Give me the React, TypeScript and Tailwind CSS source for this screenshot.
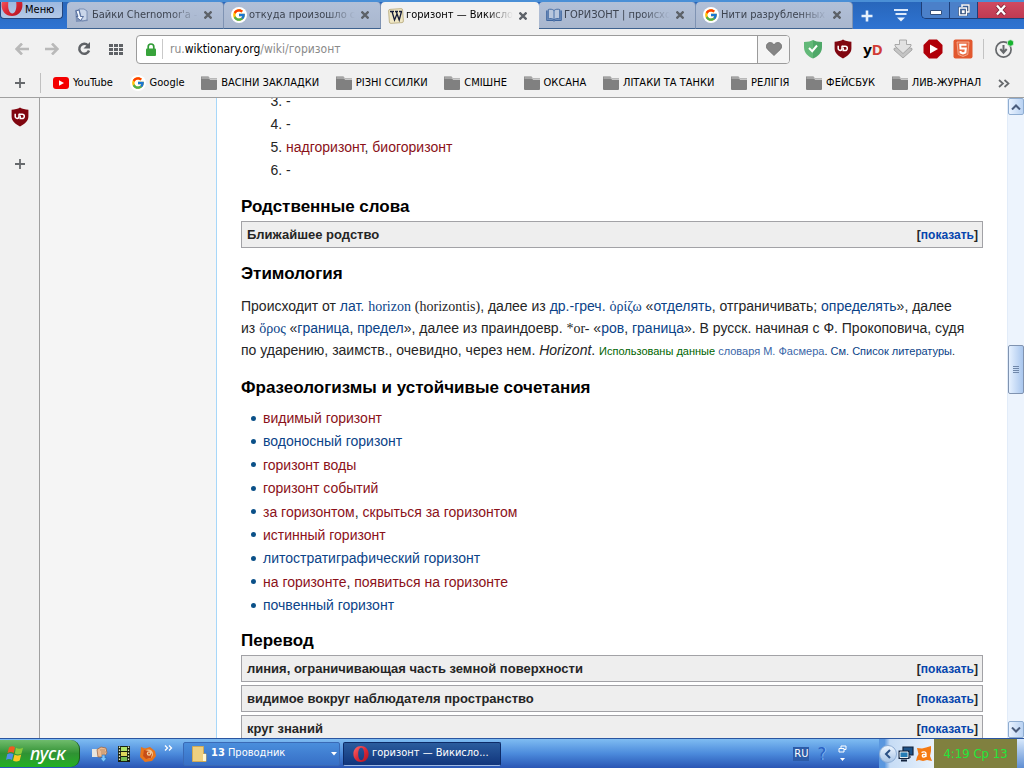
import React from "react";
import { FcGoogle } from "react-icons/fc";

function Shield({ className }: { className: string }) {
  return (
    <svg viewBox="0 0 20 20" className={className} aria-hidden="true">
      <path d="M10 0.6C7.8 2.1 4.8 2.6 1.6 2.7v6.8c0 4.6 3.8 7.6 8.4 10 4.6-2.4 8.4-5.4 8.4-10V2.7C15.200 2.600 12.200 2.100 10 0.600z" fill="#800610" />
      <path d="M5.200 6.800v2.700a1.900 1.900 0 0 0 3.800 0V6.800" fill="none" stroke="#fff" strokeWidth="1.500" />
      <path d="M9 7.300h3.200a2.100 2.100 0 0 1 0 4.200H10.200V8.500" fill="none" stroke="#fff" strokeWidth="1.500" />
    </svg>
  );
}

function Folder() {
  return (
    <svg viewBox="0 0 16 14" className="h-[14px] w-4 shrink-0" aria-hidden="true">
      <path d="M0 0.500h7.500l1.500 2H16V13a1 1 0 0 1-1 1H1a1 1 0 0 1-1-1z" fill="#808080" />
      <path d="M0.500 2h7.500l1 1.500h7" stroke="#c9c9c9" strokeWidth="1" fill="none" />
    </svg>
  );
}

function OperaO({ className }: { className: string }) {
  return (
    <svg viewBox="0 0 20 20" className={className} aria-hidden="true">
      <defs>
        <linearGradient id="opera" x1="0" x2="1" y1="0" y2="1">
          <stop offset="0" stopColor="#ff6a6a" />
          <stop offset="0.500" stopColor="#dd2a38" />
          <stop offset="1" stopColor="#b0121f" />
        </linearGradient>
      </defs>
      <path fillRule="evenodd" fill="url(#opera)" d="M10 0c5.500 0 9.500 4.200 9.500 10S15.500 20 10 20 0.500 15.800 0.500 10 4.500 0 10 0zm0.300 2.300C7.900 2.300 6.500 5.500 6.500 10s1.400 7.700 3.800 7.700S14 14.500 14 10s-1.400-7.700-3.700-7.700z" />
    </svg>
  );
}

function Google() {
  return (
    <span className="flex size-4 shrink-0 items-center justify-center rounded-full bg-white">
      <FcGoogle className="size-[14px]" />
    </span>
  );
}

function PageIcon() {
  return (
    <svg viewBox="0 0 16 16" className="size-4 shrink-0" aria-hidden="true">
      <path d="M1 3l7-1 6 12-12 1z" fill="#7f93b8" />
      <path d="M5 2h5l3 2v9l-5 1z" fill="#c9d6ea" stroke="#6a80a8" strokeWidth="0.800" />
      <path d="M2 4l3-1 1.500 6.500h3l-3 4-4.500-4h2z" fill="#f3f8ff" stroke="#4d6698" strokeWidth="0.900" />
    </svg>
  );
}

function WikiIcon() {
  return (
    <svg viewBox="0 0 16 16" className="size-4 shrink-0" aria-hidden="true">
      <rect x="1" y="1" width="14" height="14" rx="1.500" fill="#f1e8c6" stroke="#b5a778" strokeWidth="0.800" transform="rotate(-4 8 8)" />
      <path d="M2 3.500h4M7 3.500h3M11 3.500h3M4 3.500l2.500 8.500L9 6M8.200 3.500l3 8.500 2.300-8.500" fill="none" stroke="#151c38" strokeWidth="1.300" />
    </svg>
  );
}

function BookIcon() {
  return (
    <svg viewBox="0 0 16 16" className="size-4 shrink-0" aria-hidden="true">
      <path d="M0.700 3.500v10H7l1 0.700 1-0.700h6.300v-10" fill="#7391bd" stroke="#3e669f" />
      <path d="M8 3.500C6.500 2 4 2 2.300 2.500v9.300C4 11.300 6.500 11.300 8 12.800c1.500-1.500 4-1.500 5.700-1V2.500C12 2 9.500 2 8 3.500zv9" fill="#b9c7dd" stroke="#4b70a6" />
    </svg>
  );
}

function Cross() {
  return (
    <svg viewBox="0 0 8 8" className="size-2" aria-hidden="true">
      <path d="M0.500 0.500l7 7M7.500 0.500l-7 7" stroke="currentColor" strokeWidth="2.300" />
    </svg>
  );
}

const tabs = [
  { title: "Байки Chernomor'a -", icon: <PageIcon />, active: false },
  { title: "откуда произошло с", icon: <Google />, active: false },
  { title: "горизонт — Викисло", icon: <WikiIcon />, active: true },
  { title: "ГОРИЗОНТ | происхо", icon: <BookIcon />, active: false },
  { title: "Нити разрубленных", icon: <Google />, active: false },
];

function TabBar() {
  return (
    <header className="flex h-[29px] items-start border-t-2 border-[#4a8fd6] bg-linear-to-b from-[#2866bb] to-[#2f74d2]">
      <button className="flex h-[17px] w-[63px] shrink-0 items-center gap-[2px] overflow-hidden rounded-b-[4px] border border-t-0 border-[#24457c] bg-linear-to-b from-[#9db9df] to-[#b4c9e7] pr-1 text-[11px] text-black">
        <OperaO className="mb-[10px] size-[22px] shrink-0" />
        Меню
      </button>
      <nav className="ml-1 flex h-[27px] min-w-0 flex-1">
        {tabs.map((t) => (
          <div
            key={t.title}
            className={
              t.active
                ? "flex h-full min-w-0 max-w-[158px] flex-1 items-center gap-[2px] rounded-t-[4px] bg-[#f1f1f1] pr-2 pl-[7px] text-black"
                : "flex h-full min-w-0 max-w-[157px] flex-1 items-center gap-[2px] rounded-t-[4px] border-r border-b border-[#7f93b3] border-b-[#3e628f] bg-linear-to-b from-[#b2c0d8] to-[#a9b7ce] px-[7px] text-[#3d4450]"
            }
          >
            {t.icon}
            <a href="#tab" className="min-w-0 flex-1 whitespace-nowrap [mask-image:linear-gradient(to_right,black_74%,transparent_100%)]">
              {t.title}
            </a>
            <button aria-label="Закрыть вкладку" className="flex size-4 shrink-0 items-center justify-center text-[#5d6269]">
              <Cross />
            </button>
          </div>
        ))}
        <button aria-label="Новая вкладка" className="flex w-7 shrink-0 items-center justify-center">
          <svg viewBox="0 0 12 12" className="size-3"><path d="M6 0.500v11M0.500 6h11" stroke="#e6f0fc" strokeWidth="2.600" /></svg>
        </button>
        <button aria-label="Список вкладок" className="flex w-10 shrink-0 items-center justify-center">
          <svg viewBox="0 0 14 13" className="h-[13px] w-[14px]"><path d="M0 1h14M1.500 5h11" stroke="#dbe9fb" strokeWidth="1.800" /><path d="M3 8.500h8L7 12.500z" fill="#e9f2fd" /></svg>
        </button>
      </nav>
      <div className="flex h-[17px] shrink-0 overflow-hidden rounded-bl-[5px] border-b border-l border-[#1d3f78]">
        <button aria-label="Свернуть" className="flex w-7 items-center justify-center border-r border-[#1d3f78] bg-[#4b80c9]">
          <svg viewBox="0 0 12 12" className="size-3"><path d="M0.500 6.500h11v4H0.500z" fill="#fff" stroke="#34507c" /></svg>
        </button>
        <button aria-label="Восстановить" className="flex w-7 items-center justify-center border-r border-[#1d3f78] bg-[#4b80c9]">
          <svg viewBox="0 0 12 12" className="size-3"><path d="M4 1h7v7H9M1.500 4h7v7h-7zM4.500 7h1.500v1.500H4.500z" fill="none" stroke="#26426e" strokeWidth="2.600" /><path d="M4 3V1h7v7H9M1.500 4h7v7h-7zM4.500 7h1.500v1.500H4.500z" fill="none" stroke="#fff" strokeWidth="1.400" /></svg>
        </button>
        <button aria-label="Закрыть" className="flex w-[46px] items-center justify-center bg-linear-to-b from-[#d04a60] to-[#bf3a52]">
          <svg viewBox="0 0 12 12" className="size-3"><path d="M2 1.500l8 9M10 1.500l-8 9" stroke="#772233" strokeWidth="4" /><path d="M2 1.500l8 9M10 1.500l-8 9" stroke="#fff" strokeWidth="2.400" /></svg>
        </button>
      </div>
    </header>
  );
}

function AddressBar() {
  return (
    <div className="flex h-10 items-center pl-3 pr-[10px]">
      <button aria-label="Назад" className="flex w-5 justify-center">
        <svg viewBox="0 0 14 12" className="h-3 w-[14px]"><path d="M7 0.500L1.500 6 7 11.500M1.500 6H14" fill="none" stroke="#b9b9b9" strokeWidth="2.600" /></svg>
      </button>
      <button aria-label="Вперёд" className="ml-[10px] flex w-5 justify-center">
        <svg viewBox="0 0 14 12" className="h-3 w-[14px]"><path d="M7 0.500L12.500 6 7 11.500M12.500 6H0" fill="none" stroke="#b9b9b9" strokeWidth="2.600" /></svg>
      </button>
      <button aria-label="Обновить" className="ml-3 flex w-5 justify-center">
        <svg viewBox="0 0 14 14" className="size-[14px]"><path d="M11 3.500A5 5 0 1 0 12 8.500" fill="none" stroke="#5f6266" strokeWidth="2.500" /><path d="M13 0v6.500H6.500z" fill="#5f6266" /></svg>
      </button>
      <button aria-label="Экспресс-панель" className="ml-3 flex w-5 justify-center">
        <svg viewBox="0 0 14 11" className="h-[11px] w-[14px]"><path d="M0 1.500h14M0 5.500h14M0 9.500h14" stroke="#5f6266" strokeWidth="3" strokeDasharray="4 1" /></svg>
      </button>
      <div className="ml-[10px] flex h-[29px] min-w-0 flex-1 items-center rounded-[4px] border border-[#9b9b9b] bg-white">
        <svg viewBox="0 0 10 13" className="ml-[9px] h-[13px] w-[10px] shrink-0" aria-hidden="true"><path d="M2.200 6V3.800a2.800 2.800 0 0 1 5.600 0V6" fill="none" stroke="#2f9a35" strokeWidth="1.700" /><rect y="5.500" width="10" height="7.500" rx="1" fill="#38a33b" /></svg>
        <span className="ml-[6px] h-5 w-px bg-[#c9c9c9]" />
        <div role="textbox" aria-label="Адрес" tabIndex={0} className="ml-[7px] min-w-0 flex-1 overflow-hidden whitespace-nowrap text-[12px] text-[#8a8a8a]">
          ru.<span className="text-black">wiktionary.org</span>/wiki/горизонт
        </div>
        <button aria-label="Добавить в закладки" className="flex h-full w-8 items-center justify-center rounded-r-[3px] border-l border-[#9b9b9b] bg-[#f4f4f4]">
          <svg viewBox="0 0 16 14" className="h-[14px] w-4"><path d="M8 13.500L1.500 7.300C-1 4.200 1 0.500 4.200 0.500 6 0.500 7.300 1.500 8 2.800 8.700 1.500 10 0.500 11.800 0.500c3.200 0 5.200 3.700 2.700 6.800z" fill="#858585" stroke="#6c6c6c" strokeWidth="0.800" /></svg>
        </button>
      </div>
      <div className="ml-[13px] flex shrink-0 items-center gap-[10px]">
        <button aria-label="Защита">
          <svg viewBox="0 0 20 20" className="size-5"><path d="M10 1C8 2.300 5 3 1 3v5c0 6 4 9.500 9 11.500z" fill="#62b878" /><path d="M10 1c2 1.300 5 2 9 2v5c0 6-4 9.500-9 11.500z" fill="#4ea868" /><path d="M6 9l3.200 3.200L14 6.500" fill="none" stroke="#fff" strokeWidth="2" /></svg>
        </button>
        <button aria-label="uBlock"><Shield className="size-5" /></button>
        <button className="w-5 font-['Noto_Sans',sans-serif] text-[15px] leading-5 font-bold text-black">y<span className="text-[#d13c36]">D</span></button>
        <button aria-label="Загрузчик">
          <svg viewBox="0 0 20 20" className="size-5"><path d="M1 9.500l3-1h12l3 1v1.500L10 19l-9-8z" fill="#c4c4c4" stroke="#9a9a9a" strokeWidth="0.800" /><path d="M6.500 1h7v4.500H18v1.500l-8 7.500-8-7.500V5.500h4.500z" fill="#e2e2e2" stroke="#999" strokeWidth="0.800" /></svg>
        </button>
        <button aria-label="Видео">
          <svg viewBox="0 0 20 20" className="size-5"><path d="M6 0.500h8L19.500 6v8L14 19.500H6L0.500 14V6z" fill="#b00009" /><path d="M7 5.500l8 4.500-8 4.500z" fill="#fff" /></svg>
        </button>
        <button aria-label="HTML5">
          <svg viewBox="0 0 20 20" className="size-5"><rect x="0.500" y="0.500" width="19" height="19" rx="2" fill="#e2582f" /><path d="M4 3h12l-1.200 12.500L10 17.500l-4.800-2z" fill="#ea6a42" stroke="#f7c3ae" strokeWidth="0.700" /><path d="M13.500 5.700H7.200l0.300 3.800h5.300l-0.400 4-2.400 0.900-2.400-0.900-0.100-1.500" fill="none" stroke="#fff" strokeWidth="2" /></svg>
        </button>
        <span className="h-5 w-px bg-[#c3c3c3]" />
        <button aria-label="Загрузки">
          <svg viewBox="0 0 20 20" className="size-5"><circle cx="9.500" cy="10.500" r="7.600" fill="none" stroke="#66696c" strokeWidth="1.700" /><path d="M9.500 6v7M6.300 10l3.200 3.700 3.200-3.700" fill="none" stroke="#66696c" strokeWidth="2" /><circle cx="16.500" cy="4" r="3.200" fill="#17b32f" stroke="#f1f1f1" strokeWidth="0.700" /></svg>
        </button>
      </div>
    </div>
  );
}

const folders = ["ВАСІНИ ЗАКЛАДКИ", "РІЗНІ ССИЛКИ", "СМІШНЕ", "ОКСАНА", "ЛІТАКИ ТА ТАНКИ", "РЕЛІГІЯ", "ФЕЙСБУК", "ЛИВ-ЖУРНАЛ"];

function Bookmarks() {
  return (
    <nav className="flex h-[29px] items-center overflow-hidden border-b border-[#a0a0a0] pl-[15px] whitespace-nowrap text-black">
      <button aria-label="Добавить закладку">
        <svg viewBox="0 0 10 10" className="size-[10px]"><path d="M5 0v10M0 5h10" stroke="#66696c" strokeWidth="1.800" /></svg>
      </button>
      <span className="ml-[15px] h-5 w-px shrink-0 bg-[#c0c0c0]" />
      <div className="flex min-w-0 flex-1 items-center justify-between pr-[14px] pl-3">
        <a href="#youtube" className="flex items-center gap-1">
          <svg viewBox="0 0 16 12" className="h-3 w-4" aria-hidden="true"><rect width="16" height="12" rx="3" fill="#f40000" /><path d="M6 3.200v5.600L11 6z" fill="#fff" /></svg>
          YouTube
        </a>
        <a href="#google" className="flex items-center gap-1"><Google />Google</a>
        {folders.map((f) => (
          <a key={f} href="#folder" className="flex items-center gap-1"><Folder />{f}</a>
        ))}
        <button aria-label="Ещё">
          <svg viewBox="0 0 12 9" className="h-[9px] w-3"><path d="M1 1l4 3.500L1 8M6.500 1l4 3.500-4 3.500" fill="none" stroke="#66696c" strokeWidth="1.700" /></svg>
        </button>
      </div>
    </nav>
  );
}

function Red({ children }: { children: React.ReactNode }) {
  return <a href="#new" className="text-[#8b1119]">{children}</a>;
}
function Blue({ children }: { children: React.ReactNode }) {
  return <a href="#wiki" className="text-[#0b4388]">{children}</a>;
}
function Serif({ children }: { children: React.ReactNode }) {
  return <span className="font-['Liberation_Serif',serif] leading-none">{children}</span>;
}
function Heading({ children }: { children: React.ReactNode }) {
  return <h3 className="text-[17px] leading-[22px] font-bold text-black">{children}</h3>;
}
function Fold({ children }: { children: React.ReactNode }) {
  return (
    <section className="flex h-[27px] shrink-0 items-center justify-between border border-[#a2a2a6] bg-[#eeeeee] pr-1 pl-[5px] text-[13px] font-bold">
      <span>{children}</span>
      <span className="text-[12px]">[<button className="font-bold text-[#0645ad]">показать</button>]</span>
    </section>
  );
}

const phrases = [
  <Red>видимый горизонт</Red>,
  <Blue>водоносный горизонт</Blue>,
  <Red>горизонт воды</Red>,
  <Red>горизонт событий</Red>,
  <><Red>за горизонтом</Red>, <Red>скрыться за горизонтом</Red></>,
  <Red>истинный горизонт</Red>,
  <Blue>литостратиграфический горизонт</Blue>,
  <><Red>на горизонте</Red>, <Red>появиться на горизонте</Red></>,
  <Blue>почвенный горизонт</Blue>,
];

function Article() {
  return (
    <article className="min-w-0 flex-1 overflow-hidden border-l border-[#a7d7f9] bg-white px-6 font-['Liberation_Sans',sans-serif] text-[14px] leading-[22px] text-[#252525]">
      <ol start={3} className="-mt-2 flex list-decimal flex-col gap-px pl-[45px]">
        <li>-</li>
        <li>-</li>
        <li><Red>надгоризонт</Red>, <Red>биогоризонт</Red></li>
        <li>-</li>
      </ol>
      <div className="mt-[15px]"><Heading>Родственные слова</Heading></div>
      <div className="mt-[3px]"><Fold>Ближайшее родство</Fold></div>
      <div className="mt-[15px]"><Heading>Этимология</Heading></div>
      <p className="mt-[10px]">
        Происходит от <Blue>лат.</Blue> <Blue><Serif>horizon</Serif></Blue> <Serif>(horizontis)</Serif>, далее из <Blue>др.-греч.</Blue> <Blue><Serif>ὁρίζω</Serif></Blue> «<Blue>отделять</Blue>, отграничивать; <Blue>определять</Blue>», далее<br />
        из <Blue><Serif>ὅρος</Serif></Blue> «<Blue>граница</Blue>, <Blue>предел</Blue>», далее из праиндоевр. <Serif>*or-</Serif> «<Blue>ров</Blue>, <Blue>граница</Blue>». В русск. начиная с Ф. Прокоповича, судя<br />
        по ударению, заимств., очевидно, через нем. <i>Horizont</i>. <small className="text-[11px] leading-none"><span className="text-[#006400]">Использованы данные</span> <a href="#fasmer" className="text-[#3a66a8]">словаря М. Фасмера</a>. <Blue>См.</Blue> <Blue>Список литературы</Blue>.</small>
      </p>
      <div className="mt-4"><Heading>Фразеологизмы и устойчивые сочетания</Heading></div>
      <ul className="mt-2 flex min-h-[209px] flex-col justify-between">
        {phrases.map((p, i) => (
          <li key={i} className="flex items-center">
            <span className="mr-[7px] ml-[10px] size-[5px] rounded-full bg-[#0a5088]" />
            <span>{p}</span>
          </li>
        ))}
      </ul>
      <div className="mt-[14px]"><Heading>Перевод</Heading></div>
      <div className="mt-[3px] flex flex-col gap-[3px]">
        <Fold>линия, ограничивающая часть земной поверхности</Fold>
        <Fold>видимое вокруг наблюдателя пространство</Fold>
        <Fold>круг знаний</Fold>
      </div>
    </article>
  );
}

function Scrollbar() {
  const btn = "flex h-[17px] w-full items-center justify-center rounded-[2px] border border-[#8fadd1] bg-linear-to-r from-[#eaf3ff] to-[#b9d2f2]";
  return (
    <div className="flex w-[17px] shrink-0 flex-col items-center border-l border-[#e2ecf9] bg-[#edf4fd]">
      <button aria-label="Вверх" className={btn}>
        <svg viewBox="0 0 10 6" className="h-[6px] w-[10px]"><path d="M1 5.500l4-4 4 4" fill="none" stroke="#4a5c7c" strokeWidth="2" /></svg>
      </button>
      <div className="grow-[230]" />
      <div className="flex h-[49px] w-full flex-col items-center justify-center gap-px rounded-[2px] border border-[#8093b0] bg-linear-to-r from-[#e6f1ff] to-[#a9c6ed]">
        <span className="h-px w-[6px] bg-[#6f87aa]" />
        <span className="h-px w-[6px] bg-[#6f87aa]" />
        <span className="h-px w-[6px] bg-[#6f87aa]" />
        <span className="h-px w-[6px] bg-[#6f87aa]" />
      </div>
      <div className="grow-[326]" />
      <button aria-label="Вниз" className={btn}>
        <svg viewBox="0 0 10 6" className="h-[6px] w-[10px]"><path d="M1 0.500l4 4 4-4" fill="none" stroke="#4a5c7c" strokeWidth="2" /></svg>
      </button>
    </div>
  );
}

function Taskbar() {
  return (
    <footer className="flex h-[30px] shrink-0 items-center overflow-hidden border-t border-[#2a55a0] bg-linear-to-b from-[#7fbcf2] via-[#4c8bdc] to-[#2a55b4] text-[11px] text-white">
      <button className="flex h-[27px] w-20 shrink-0 items-center gap-[6px] rounded-r-[9px] border-r border-[#1c5a1c] bg-linear-to-b from-[#6fbc6c] via-[#2f9233] to-[#22b021] pl-[6px] font-['Noto_Sans',sans-serif] text-[18px] italic">
        <svg viewBox="0 0 18 18" className="size-[18px] shrink-0" aria-hidden="true">
          <path d="M3 2.500C5 1 7 1 9 2.200L7.700 8C5.700 6.800 3.700 6.800 1.500 8.200z" fill="#ef5a22" />
          <path d="M10 2.700c2 1.300 4.300 1.300 7 0l-1.500 5.800c-2.500 1.300-4.700 1.200-6.700 0z" fill="#8dcc3b" />
          <path d="M1.200 9.300c2.200-1.400 4.200-1.400 6.200-0.200L6 15c-2-1.200-4.200-1.200-6 0z" fill="#4f8eea" />
          <path d="M8.500 9.600c2 1.200 4.200 1.300 6.700 0L13.700 15.500c-2.500 1.300-4.700 1.200-6.700 0z" fill="#fcc825" />
        </svg>
        <span className="font-medium">пуск</span>
      </button>
      <nav className="ml-3 flex items-center gap-2">
        <a href="#messages" aria-label="Рука">
          <svg viewBox="0 0 16 16" className="size-4"><path d="M0 3h6v8H0z" fill="#e7e5df" /><path d="M5 3.500l4-2.500 5 1 1 5-3 4H6z" fill="#edbb91" stroke="#9a694c" strokeWidth="0.800" /><path d="M8 4h5M9 6h5M9 8h4" stroke="#a87850" strokeWidth="0.700" /><path d="M10 9h3v3h2l-3.500 4L8 12h2z" fill="#7fc5fb" stroke="#226bb5" strokeWidth="0.600" /></svg>
        </a>
        <a href="#media" aria-label="Плеер">
          <svg viewBox="0 0 16 16" className="size-4"><path d="M2 0h12v16H2z" fill="#18200f" /><path d="M5 1h6v4H5z" fill="#aee36a" /><path d="M5 6h6v4H5z" fill="#ded75c" /><path d="M5 11h6v4H5z" fill="#76bd54" /><path d="M3.500 0.500v15M12.500 0.500v15" stroke="#e2e7c9" strokeWidth="1.300" strokeDasharray="1.500 1.500" /></svg>
        </a>
        <a href="#browser" aria-label="Браузер">
          <svg viewBox="0 0 16 16" className="size-4"><path d="M1 1l4 1.500L10 1l5 4 1 5-4 5-7 1-5-5z" fill="#e8751b" /><circle cx="8.500" cy="8" r="4.500" fill="#f3c48d" /><path d="M4 4l5 1 3 3-1 4-5 1-3-3z" fill="#c64d18" /><circle cx="9" cy="7.500" r="2.200" fill="#f6d0a0" /><circle cx="9" cy="7.500" r="1" fill="#d35a1c" /></svg>
        </a>
        <button aria-label="Ещё программы" className="mb-3">
          <svg viewBox="0 0 9 6" className="h-[6px] w-[9px]"><path d="M1 0.500L3.500 3 1 5.500M5 0.500L7.500 3 5 5.500" fill="none" stroke="#fff" strokeWidth="1.300" /></svg>
        </button>
      </nav>
      <button className="ml-[10px] flex h-6 w-[157px] shrink-0 items-center gap-1 rounded-[2px] border border-[#3a6ab6] bg-linear-to-b from-[#4a8edc] to-[#376fc6] pr-[2px] pl-2">
        <svg viewBox="0 0 15 16" className="h-4 w-[15px]" aria-hidden="true"><path d="M0.500 0.500h11V8H14v7.500H0.500z" fill="#eed080" stroke="#cfa956" /><path d="M11 8h3v7h-3z" fill="#fff6d2" /></svg>
        <span><b>13</b> Проводник</span>
        <svg viewBox="0 0 6 4" className="ml-auto h-1 w-[6px] shrink-0" aria-hidden="true"><path d="M0 0h6L3 3.500z" fill="#fff" /></svg>
      </button>
      <button className="ml-[3px] flex h-6 w-[158px] shrink-0 items-center gap-[3px] rounded-[2px] border border-[#0d2b68] border-b-[#9db8e2] bg-linear-to-b from-[#2b5c9e] to-[#11357c] pl-[9px]">
        <OperaO className="size-4" />
        горизонт — Викисло...
      </button>
      <div className="ml-auto flex h-full items-center">
        <button className="bg-[#2c5ba8] px-[1px] leading-[14px]">RU</button>
        <button aria-label="Справка" className="ml-2 text-[18px] leading-5 text-[#2a62c4] [text-shadow:1px_0_#86b8f0]">?</button>
        <button aria-label="Параметры языка" className="ml-3">
          <svg viewBox="0 0 9 17" className="h-[17px] w-[9px]"><path d="M3 3V1h5v3.500H6M1 3.500h5V7H1z" fill="none" stroke="#fff" /><path d="M2 13h5l-2.500 3z" fill="#fff" /></svg>
        </button>
        <div className="ml-8 flex h-full items-center bg-linear-to-r from-[#5a97df] from-10% via-[#c6dcf5] via-20% to-[#e9f2fc]">
          <button aria-label="Показать значки" className="flex size-[18px] items-center justify-center rounded-full border border-[#8eadd4] bg-linear-to-b from-[#eef6ff] to-[#a9c5e6]">
            <svg viewBox="0 0 8 10" className="h-[10px] w-2"><path d="M6 1L2 5l4 4" fill="none" stroke="#294f83" strokeWidth="2" /></svg>
          </button>
          <svg viewBox="0 0 16 16" className="ml-px size-4" aria-hidden="true"><path d="M5 1h10v8H5zM8 11h5" fill="#1c5288" stroke="#12233d" strokeWidth="1.200" /><path d="M1.500 5.500h9V12h-9z" fill="#2e82bc" stroke="#12233d" strokeWidth="2" /><path d="M2 6h8v5.500H2z" fill="#267cb4" stroke="#fff" strokeWidth="0.900" /><path d="M3 14.500h6" stroke="#12233d" strokeWidth="2" /></svg>
          <svg viewBox="0 0 16 16" className="mr-[2px] ml-[2px] size-4" aria-hidden="true"><path d="M1 2l5 0.500 4-1 5-1.500v5l-1 5 2 5-5-1-4 1-4-1-3 1 1-4 1.500-3z" fill="#f57a12" /><path d="M5.500 6.500C7 5.500 10 5.500 10 7.500V11M10 8.500H7.500a1.200 1.200 0 0 0 0 2.500C9 11 10 10.500 10 9" fill="none" stroke="#fff" strokeWidth="1.300" /></svg>
        </div>
        <time className="flex h-full w-[83px] items-center justify-center bg-[#80803f] text-[13px] text-[#1fe83a]">4:19 Ср 13</time>
        <span className="h-full w-[7px] bg-linear-to-b from-[#d9e9fb] to-[#5f8ed2]" />
      </div>
    </footer>
  );
}

export default function App() {
  return (
    <div className="flex h-screen flex-col overflow-hidden bg-[#f1f1f1] font-['DejaVu_Sans_Condensed','DejaVu_Sans',sans-serif] text-[11px]">
      <TabBar />
      <AddressBar />
      <Bookmarks />
      <main className="flex min-h-0 flex-1">
        <aside className="flex w-10 shrink-0 flex-col items-center gap-8 border-r border-[#a0a0a0] pt-[9px]">
          <button aria-label="uBlock"><Shield className="size-5" /></button>
          <button aria-label="Добавить">
            <svg viewBox="0 0 10 10" className="size-[10px]"><path d="M5 0v10M0 5h10" stroke="#66696c" strokeWidth="1.800" /></svg>
          </button>
        </aside>
        <div className="w-44 shrink-0 bg-[#f5f5f5]" />
        <Article />
        <Scrollbar />
      </main>
      <Taskbar />
    </div>
  );
}
